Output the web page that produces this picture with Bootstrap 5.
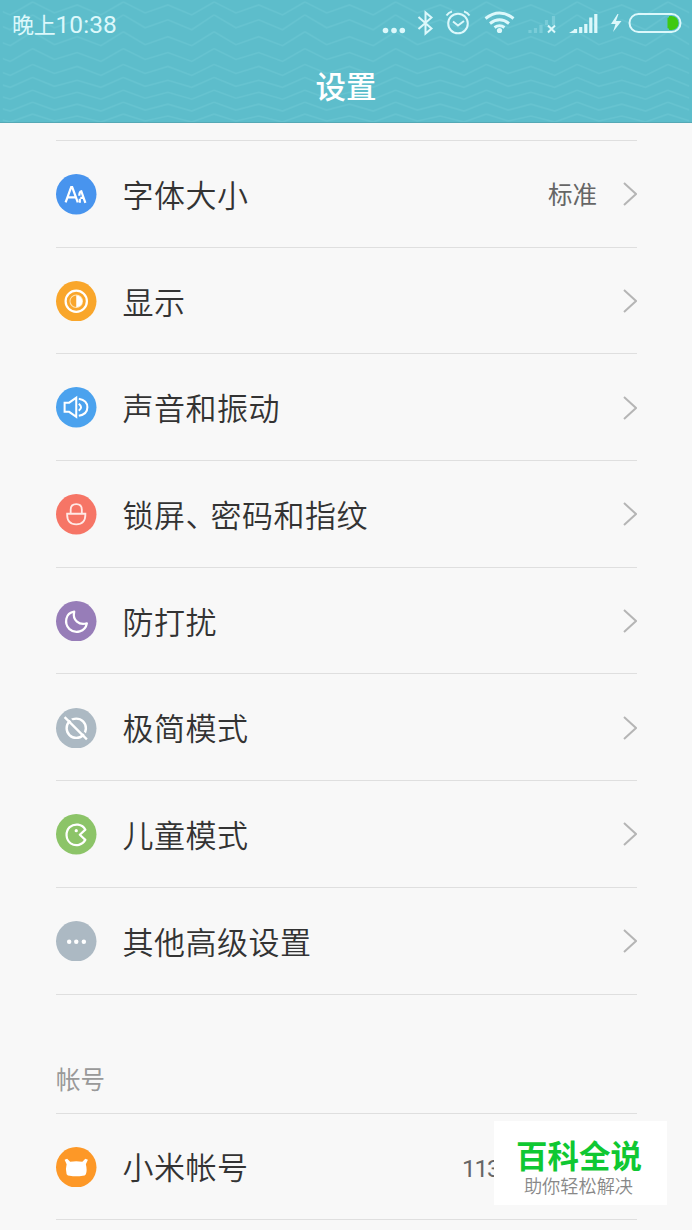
<!DOCTYPE html>
<html lang="zh-CN">
<head>
<meta charset="utf-8">
<meta name="viewport" content="width=device-width, initial-scale=1">
<title>设置</title>
<link rel="stylesheet" href="https://cdn.jsdelivr.net/npm/bootstrap@5.3.0/dist/css/bootstrap.min.css">
<style>
body{font-family:Roboto,"Noto Sans CJK SC",sans-serif;background:#f8f8f8;height:1230px;overflow:hidden;color:#333;position:relative}
.topbar{height:123px;background:#5dbdcb;border-bottom:1px solid #55a9b6;position:relative;color:#fff}
.waves{position:absolute;inset:0;width:100%;height:100%}
.statusbar{height:48px;padding-left:12px;position:relative;color:#dcf8fb}
.clock{font-size:24.5px;line-height:50px;letter-spacing:.1px}
.clock .han{font-size:22px;letter-spacing:-.3px}
.status-icons{position:absolute;left:370px;top:0;width:322px;height:48px}
.page-title{font-size:30.5px;line-height:74px;height:74px;position:relative;font-weight:500;padding-top:3px}
.settings{padding:17px 55px 0 56px}
.settings .list-group{--bs-list-group-bg:transparent}
.setting{height:106.7px;border-width:0 0 1px!important;border-color:#dfdfdf!important;border-radius:0!important;background:transparent;padding:1px 0 0;color:#333}
.first-line{border-top:1px solid #dfdfdf}
.round{width:40.5px;height:40.5px;flex:none}
.round svg,.chev{display:block}
.label{font-size:31px;font-weight:350;letter-spacing:.5px;margin-left:26px;line-height:40px;padding-top:5px}
.comma{font-feature-settings:"halt";margin-right:9px}
.value{font-size:24.5px;color:#666;line-height:36px;padding-top:4px}
.chev{width:14px;height:24px;margin-left:26px;flex:none}
.group-title{height:119px;padding-top:68px;font-size:24.5px;line-height:36px;color:#999;border-bottom:1px solid #dfdfdf}
.watermark{position:absolute;left:494px;top:1121px;width:173px;height:84px;background:#fff}
.brand-name{font-size:31.5px;line-height:34px;font-weight:700;color:#0fc832;margin-top:20px;margin-left:-3px}
.slogan{font-size:18.2px;line-height:24px;color:#888;font-weight:350;margin-top:0;margin-left:-4px}
</style>
</head>
<body>
<header class="topbar">
  <svg class="waves" viewBox="0 0 692 123" fill="none" stroke="#66c3d0" stroke-width="1.6">
    <defs>
      <pattern id="zig" width="91.5" height="123" x="30" patternUnits="userSpaceOnUse">
        <path d="M0 2 22 13 45 5 69 15 91.5 2M0 15 22 28 45 20 69 30 91.5 15M0 32 22 45 45 37 69 46 91.5 32M0 49 22 60 45 53 69 62 91.5 49M0 65 22 74 45 67 69 76 91.5 65M0 78 22 87 45 81 69 88 91.5 78M0 91 22 99 45 93 69 100 91.5 91M0 103 22 111 45 105 69 112 91.5 103M0 115 22 122 45 117 69 123 91.5 115"/>
      </pattern>
    </defs>
    <rect width="692" height="123" fill="url(#zig)" stroke="none"/>
  </svg>
  <div class="statusbar">
    <div class="clock"><span class="han">晚上</span>10:38</div>
    <svg class="status-icons" viewBox="0 0 322 48" fill="none" stroke="#dcf8fb" stroke-width="2">
      <g fill="#dcf8fb" stroke="none"><circle cx="15.5" cy="30.5" r="2.8"/><circle cx="24" cy="30.5" r="2.8"/><circle cx="32.3" cy="30.5" r="2.8"/></g>
      <path d="M48.5 17 61.5 28.5 55.5 33.5V12.5L61.5 17.5 48.5 29"/>
      <circle cx="88" cy="23.5" r="9.8"/><path d="M83 21.5 88 25.5 94 21M76.5 15.5Q78.5 12.5 82 11.5M99.5 15.5Q97.5 12.5 94 11.5"/>
      <g stroke-width="3"><path d="M115.5 18.5Q129.5 7.5 143.5 18.5M120 23.5Q129.5 16 139 23.5M124.5 27.5Q129.5 24 134.5 27.5"/></g><circle cx="129.5" cy="30.5" r="2.6" fill="#dcf8fb" stroke="none"/>
      <path stroke="#79ccd8" stroke-width="3.2" d="M160 33v-3M165.5 33v-5M171 33v-8M176.5 25v-5M183.5 25V16"/>
      <path d="m178 25.500 7 7m0-7-7 7"/>
      <path stroke-width="3.2" d="M205.500 33v-4M210.700 33v-6M215.800 33v-9M220.800 33V17.500"/><path d="m199 33 5-3v3z" fill="#dcf8fb" stroke="none"/>
      <path d="M225.800 33V14" stroke-width="3.2"/>
      <path d="m247.500 14-6.500 10h4.500l-2.500 8 8.500-11H246l2.500-7z" fill="#dcf8fb" stroke="none"/>
      <rect x="259.500" y="14" width="51" height="18" rx="9"/>
      <path d="M299 17h2.500a6 6 0 0 1 0 12H299q1.500 0-.5-1.500v-9q2-1.500.5-1.500z" fill="#3fc912" stroke="#3fc912"/>
    </svg>
  </div>
  <h1 class="page-title text-center m-0">设置</h1>
</header>

<main class="settings">
  <div class="list-group list-group-flush first-line">
    <a class="list-group-item setting d-flex align-items-center" href="#">
      <span class="round"><svg viewBox="0 0 40 40" fill="none" stroke="#fff"><circle cx="20" cy="20" r="20" fill="#4894ee" stroke="none"/><path d="m9.500 28 5.500-15h1l5.500 15M11.500 23h8" stroke-width="2.200"/><path d="m23 21.500q0-4 2-4.500l4 11.500M24 23.500h4M23.500 24.500v4" stroke-width="2.200"/></svg></span>
      <span class="label">字体大小</span><span class="value ms-auto">标准</span>
      <svg class="chev" viewBox="0 0 14 24" fill="none" stroke="#b5b5b5" stroke-width="2"><path d="m1 1 12 11L1 23"/></svg>
    </a>
    <a class="list-group-item setting d-flex align-items-center" href="#">
      <span class="round"><svg viewBox="0 0 40 40" fill="none" stroke="#fff"><circle cx="20" cy="20" r="20" fill="#f9a62b" stroke="none"/><circle cx="20" cy="20" r="10.500" stroke-width="2.200"/><circle cx="20" cy="20" r="6.200" stroke-width="1" stroke="#ffe2b0"/><path d="M20 14a6 6 0 0 1 0 12z" fill="#fff" stroke="none"/></svg></span>
      <span class="label">显示</span>
      <svg class="chev ms-auto" viewBox="0 0 14 24" fill="none" stroke="#b5b5b5" stroke-width="2"><path d="m1 1 12 11L1 23"/></svg>
    </a>
    <a class="list-group-item setting d-flex align-items-center" href="#">
      <span class="round"><svg viewBox="0 0 40 40" fill="none" stroke="#fff" stroke-width="2"><circle cx="20" cy="20" r="20" fill="#4ba2ee" stroke="none"/><path d="M8.500 15.500h4.500l7-5v19l-7-5H8.500z"/><path d="M22.500 16.500q4.500 3.500 0 7M22.500 11.500q8.500 1.500 8.500 8.500t-8.500 8.500"/></svg></span>
      <span class="label">声音和振动</span>
      <svg class="chev ms-auto" viewBox="0 0 14 24" fill="none" stroke="#b5b5b5" stroke-width="2"><path d="m1 1 12 11L1 23"/></svg>
    </a>
    <a class="list-group-item setting d-flex align-items-center" href="#">
      <span class="round"><svg viewBox="0 0 40 40" fill="none" stroke="#ffe9e6" stroke-width="1.800"><circle cx="20" cy="20" r="20" fill="#f67566" stroke="none"/><path d="M11 19.500h18v1q0 9.500-9 9.500t-9-9.500zM14.500 19v-3.500q0-5.500 5.500-5.500t5.500 5.500V19"/></svg></span>
      <span class="label">锁屏<span class="comma">、</span>密码和指纹</span>
      <svg class="chev ms-auto" viewBox="0 0 14 24" fill="none" stroke="#b5b5b5" stroke-width="2"><path d="m1 1 12 11L1 23"/></svg>
    </a>
    <a class="list-group-item setting d-flex align-items-center" href="#">
      <span class="round"><svg viewBox="0 0 40 40" fill="none" stroke="#fff" stroke-width="2.200" stroke-linejoin="round"><circle cx="20" cy="20" r="20" fill="#977db8" stroke="none"/><path d="M18 10.500C9 12 8 22 13 27.500c6 5.500 16 3 17.500-5.500C23 24.500 16 19 18 10.500z"/></svg></span>
      <span class="label">防打扰</span>
      <svg class="chev ms-auto" viewBox="0 0 14 24" fill="none" stroke="#b5b5b5" stroke-width="2"><path d="m1 1 12 11L1 23"/></svg>
    </a>
    <a class="list-group-item setting d-flex align-items-center" href="#">
      <span class="round"><svg viewBox="0 0 40 40" fill="none" stroke="#fff"><circle cx="20" cy="20" r="20" fill="#acb9c3" stroke="none"/><circle cx="20" cy="20" r="9.500" stroke-width="2.400"/><path d="m10.500 7.500 22 22" stroke="#acb9c3" stroke-width="2"/><path d="m8.500 9 22 22" stroke-width="2.300"/></svg></span>
      <span class="label">极简模式</span>
      <svg class="chev ms-auto" viewBox="0 0 14 24" fill="none" stroke="#b5b5b5" stroke-width="2"><path d="m1 1 12 11L1 23"/></svg>
    </a>
    <a class="list-group-item setting d-flex align-items-center" href="#">
      <span class="round"><svg viewBox="0 0 40 40" fill="none" stroke="#fff" stroke-width="2.200" stroke-linejoin="round"><circle cx="20" cy="20" r="20" fill="#8cc468" stroke="none"/><path d="M29 15.500C26 9.500 18 9 13.500 13c-4.500 4.500-4 12 1 16 5 3.500 12 1.500 14.500-3.500l-5.500-5z"/><circle cx="20" cy="16.500" r="1.600" fill="#fff" stroke="none"/></svg></span>
      <span class="label">儿童模式</span>
      <svg class="chev ms-auto" viewBox="0 0 14 24" fill="none" stroke="#b5b5b5" stroke-width="2"><path d="m1 1 12 11L1 23"/></svg>
    </a>
    <a class="list-group-item setting d-flex align-items-center" href="#">
      <span class="round"><svg viewBox="0 0 40 40" fill="#fff"><circle cx="20" cy="20" r="20" fill="#acb9c3"/><circle cx="13" cy="20.500" r="2.200"/><circle cx="20" cy="20.500" r="2.200"/><circle cx="27.500" cy="20.500" r="2.200"/></svg></span>
      <span class="label">其他高级设置</span>
      <svg class="chev ms-auto" viewBox="0 0 14 24" fill="none" stroke="#b5b5b5" stroke-width="2"><path d="m1 1 12 11L1 23"/></svg>
    </a>
  </div>
  <h2 class="group-title fw-normal m-0">帐号</h2>
  <a class="setting border-bottom d-flex align-items-center text-decoration-none" href="#">
    <span class="round"><svg viewBox="0 0 40 40" fill="#fff"><circle cx="20" cy="20" r="20" fill="#fd9827"/><path d="M8.500 12.500 11 11.500 14 14.500q6-1 12 0l3-3 2.500 1-2 4.500q1.500 6 0 10-1 1.500-3 1.500-6.500 1-13 0-2 0-3-1.500-1.500-5 0-10z"/></svg></span>
    <span class="label">小米帐号</span>
    <span class="value ms-auto" style="width:175px;letter-spacing:-1.3px">113</span>
  </a>
</main>

<aside class="watermark text-center">
  <div class="brand-name">百科全说</div>
  <div class="slogan">助你轻松解决</div>
</aside>
<script src="https://cdn.jsdelivr.net/npm/bootstrap@5.3.0/dist/js/bootstrap.bundle.min.js"></script>
</body>
</html>
